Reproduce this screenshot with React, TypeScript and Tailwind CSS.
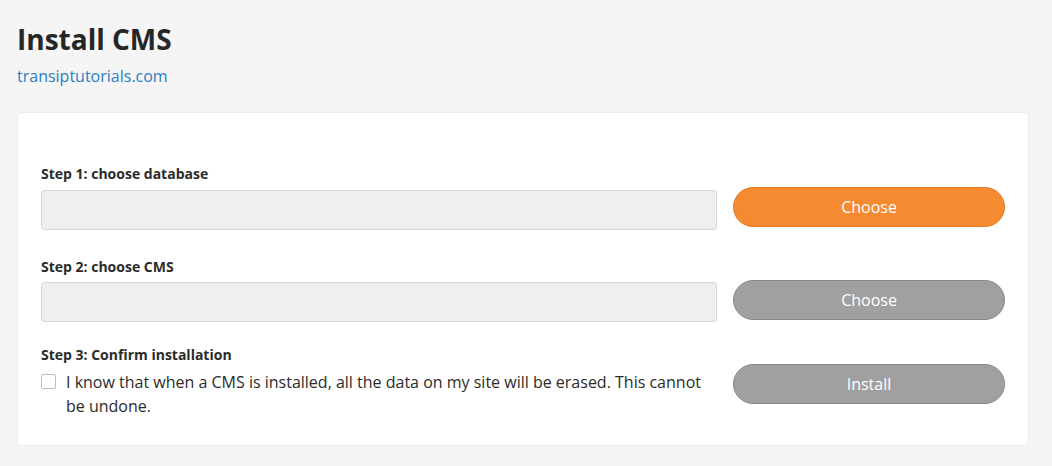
import React from 'react';

const font = { fontFamily: '"Open Sans", "Liberation Sans", sans-serif' };

const Field: React.FC = () => (
  <div className="h-[40px] w-full rounded-[3px] border border-[#d6d6d6] bg-[#efefef]" />
);

const App: React.FC = () => (
  <div className="min-h-[466px] bg-[#f5f5f5] pl-[17px] pr-[23px] pt-[19px] text-[#2b2b2b]" style={font}>
    <h1 className="text-[28px] font-bold leading-[40px] text-[#262626]">Install CMS</h1>
    <a href="#" className="mt-[5px] block text-[16px] leading-[24px] text-[#2d7dc4]">
      transiptutorials.com
    </a>

    <div className="mt-[24px] rounded-[4px] border border-[#ebebeb] bg-white px-[23px] pb-[27px] pt-[51px]">
      {/* step 1 */}
      <div className="flex gap-[16px]">
        <div className="flex-1">
          <div className="mb-[6px] text-[14px] font-bold leading-[20px]">Step 1: choose database</div>
          <Field />
        </div>
        <button className="mt-[23px] h-[40px] w-[272px] rounded-full border border-[#e57a22] bg-[#f68a30] text-[16px] text-white">
          Choose
        </button>
      </div>

      {/* step 2 */}
      <div className="mt-[27px] flex gap-[16px]">
        <div className="flex-1">
          <div className="mb-[5px] text-[14px] font-bold leading-[20px]">Step 2: choose CMS</div>
          <Field />
        </div>
        <button className="mt-[23px] h-[40px] w-[272px] rounded-full border border-[#8a8a8a] bg-[#a0a0a0] text-[16px] text-white">
          Choose
        </button>
      </div>

      {/* step 3 */}
      <div className="mt-[23px] flex gap-[16px]">
        <div className="flex-1">
          <div className="mb-[5px] text-[14px] font-bold leading-[20px]">Step 3: Confirm installation</div>
          <label className="flex items-start gap-[10px]">
            <span className="mt-[4px] h-[15px] w-[15px] shrink-0 rounded-[2px] border border-[#bdbdbd] bg-white" />
            <span className="text-[16px] leading-[24px]">
              I know that when a CMS is installed, all the data on my site will be erased. This cannot be undone.
            </span>
          </label>
        </div>
        <button className="mt-[19px] h-[40px] w-[272px] rounded-full border border-[#8a8a8a] bg-[#a0a0a0] text-[16px] text-white">
          Install
        </button>
      </div>
    </div>
  </div>
);

export default App;
